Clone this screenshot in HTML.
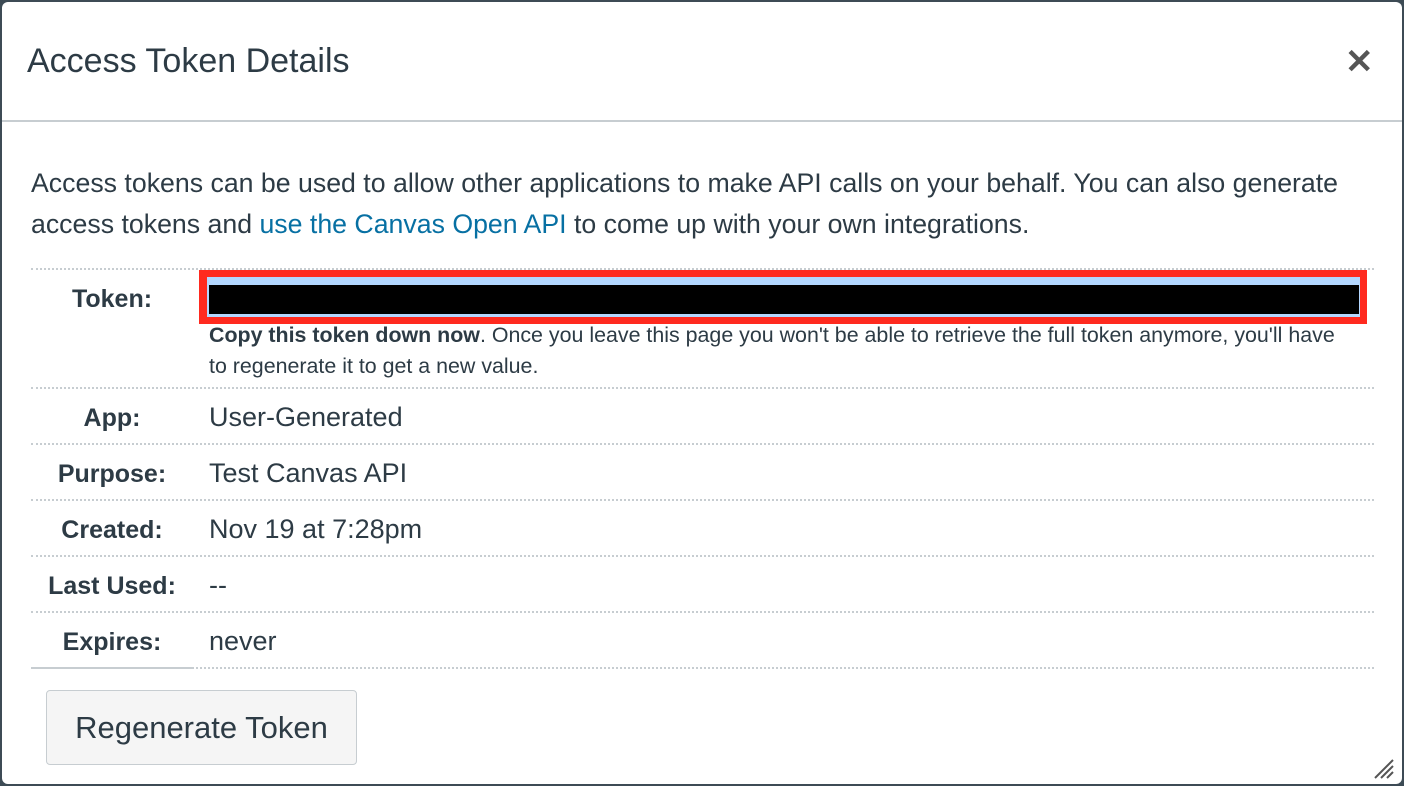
<!DOCTYPE html>
<html><head><style>
body{margin:0;width:1404px;height:786px;background:#3d4b55;font-family:"Liberation Sans",sans-serif;color:#2d3b45;overflow:hidden;position:relative}
.m{position:absolute;left:2px;top:2px;width:1400px;height:782px;background:#fff;border-radius:6px;overflow:hidden}
.h{position:absolute;left:0;top:0;width:1400px;height:118px;border-bottom:2px solid #c7cdd1}
.t{position:absolute;left:25px;top:40px;font-size:34px;white-space:nowrap}
.x{position:absolute;left:1343px;top:40px;font-size:34px;color:#555;font-weight:bold}
.p{position:absolute;left:29px;top:161px;font-size:26.7px;line-height:41px;width:1370px;white-space:nowrap}
a{color:#0770a3;text-decoration:none}
.r{position:absolute;left:29px;width:1343px;border-top:2px dotted #c7cdd1}
.l{position:absolute;width:162px;left:29px;text-align:center;font-weight:bold;font-size:25px}
.v{position:absolute;left:207px;font-size:27px}
.btn{position:absolute;left:44px;top:688px;width:309px;height:73px;background:#f5f5f5;border:1px solid #c7cdd1;border-radius:4px;font-size:31px;text-align:center;line-height:73px}
</style></head><body>
<div class="m">
<div class="h"><div class="t">Access Token Details</div><div class="x">✕</div></div>
<div class="p">Access tokens can be used to allow other applications to make API calls on your behalf. You can also generate<br>access tokens and <a>use the Canvas Open API</a> to come up with your own integrations.</div>
<div class="r" style="top:266px"></div>
<div class="l" style="top:283px">Token:</div>
<div style="position:absolute;left:197px;top:268px;width:1153px;height:40px;border:7px solid #ff2a1f;border-left-width:8px;background:#b3d7ff"><div style="position:absolute;left:2px;top:8px;width:1150px;height:29px;background:#000"></div></div>
<div style="position:absolute;left:207px;top:318px;font-size:21.4px;line-height:31px;white-space:nowrap"><b>Copy this token down now</b>. Once you leave this page you won't be able to retrieve the full token anymore, you'll have<br>to regenerate it to get a new value.</div>
<div class="r" style="top:385px"></div>
<div class="l" style="top:402px">App:</div><div class="v" style="top:400px">User-Generated</div>
<div class="r" style="top:441px"></div>
<div class="l" style="top:458px">Purpose:</div><div class="v" style="top:456px">Test Canvas API</div>
<div class="r" style="top:497px"></div>
<div class="l" style="top:514px">Created:</div><div class="v" style="top:512px">Nov 19 at 7:28pm</div>
<div class="r" style="top:553px"></div>
<div class="l" style="top:570px">Last Used:</div><div class="v" style="top:568px">--</div>
<div class="r" style="top:609px"></div>
<div class="l" style="top:626px">Expires:</div><div class="v" style="top:624px">never</div>
<div class="r" style="top:665px"></div>
<div style="position:absolute;left:29px;top:665px;width:162px;border-top:2px solid #c7cdd1"></div>
<div class="btn">Regenerate Token</div>
<svg style="position:absolute;left:1370px;top:755px" width="24" height="24"><path d="M3 21L21 3M9 21L21 9M15 21L21 15" stroke="#555" stroke-width="2"/></svg>
</div>
</body></html>
